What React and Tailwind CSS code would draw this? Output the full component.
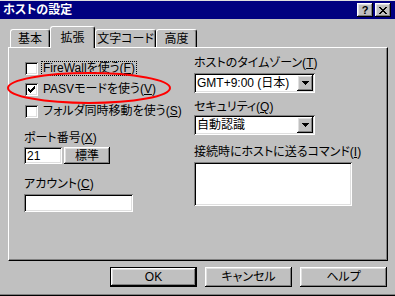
import React from 'react';

const raised =
  'shadow-[inset_-1px_-1px_0_#000,inset_1px_1px_0_#fff,inset_-2px_-2px_0_#808080,inset_2px_2px_0_#dfdfdf]';
const sunken =
  'shadow-[inset_1px_1px_0_#808080,inset_-1px_-1px_0_#fff,inset_2px_2px_0_#000,inset_-2px_-2px_0_#dfdfdf]';

const CheckBox = ({ checked }) => (
  <span className={`w-[13px] h-[13px] bg-white ${sunken} flex items-center justify-center shrink-0`}>
    {checked && (
      <svg width="7" height="7" viewBox="0 0 7 7" shapeRendering="crispEdges">
        <rect x="6" y="0" width="1" height="1" />
        <rect x="5" y="1" width="2" height="1" />
        <rect x="0" y="2" width="1" height="1" />
        <rect x="4" y="2" width="3" height="1" />
        <rect x="0" y="3" width="2" height="1" />
        <rect x="3" y="3" width="3" height="1" />
        <rect x="0" y="4" width="5" height="1" />
        <rect x="1" y="5" width="3" height="1" />
        <rect x="2" y="6" width="1" height="1" />
      </svg>
    )}
  </span>
);

const Select = ({ value }) => (
  <div className={`w-[121px] h-[20px] bg-white ${sunken} flex items-center pl-[3px] pr-[2px]`}>
    <span className="flex-1 leading-[14px] whitespace-nowrap">{value}</span>
    <span className={`w-[16px] h-[16px] bg-[#c0c0c0] ${raised} flex items-center justify-center`}>
      <svg width="7" height="4" viewBox="0 0 7 4" shapeRendering="crispEdges">
        <path d="M0 0h7v1H0zM1 1h5v1H1zM2 2h3v1H2zM3 3h1v1H3z" fill="#000" />
      </svg>
    </span>
  </div>
);

const Tab = ({ label, width, active }) => (
  <div
    className={`flex items-center justify-center border-t border-l border-white border-r border-r-black shadow-[inset_-1px_0_0_#808080] rounded-t-[3px] bg-[#c0c0c0] ${
      active ? 'h-[22px] relative z-10 -mb-px' : 'h-[18px]'
    }`}
    style={{ width }}
  >
    <span className="leading-[14px] whitespace-nowrap">{label}</span>
  </div>
);

const Button = ({ children, isDefault }) => (
  <div
    className={`w-[87px] h-[20px] flex items-center justify-center ${
      isDefault ? 'border border-black' : ''
    } ${raised}`}
  >
    {children}
  </div>
);

export default function App() {
  return (
    <div className="relative w-[395px] h-[296px] bg-[#c0c0c0] text-black text-[12px] font-['Liberation_Sans','Noto_Sans_CJK_JP',sans-serif] [font-feature-settings:'palt'] whitespace-nowrap border-t border-t-[#dfdfdf] flex flex-col overflow-hidden">
      {/* Title bar */}
      <div className="h-[18px] bg-[#000080] flex items-center pl-[3px] pr-[4px]">
        <span className="flex-1 text-white font-bold leading-[14px]">ホストの設定</span>
        <div className="flex gap-[2px]">
          <span className={`w-[16px] h-[14px] bg-[#c0c0c0] ${raised} flex items-center justify-center font-bold text-[11px] leading-none`}>
            ?
          </span>
          <span className={`w-[16px] h-[14px] bg-[#c0c0c0] ${raised} flex items-center justify-center`}>
            <svg width="8" height="7" viewBox="0 0 8 7" shapeRendering="crispEdges">
              <path d="M0 0h2v1H0zM6 0h2v1H6zM1 1h2v1H1zM5 1h2v1H5zM2 2h4v1H2zM3 3h2v1H3zM2 4h4v1H2zM1 5h2v1H1zM5 5h2v1H5zM0 6h2v1H0zM6 6h2v1H6z" fill="#000" />
            </svg>
          </span>
        </div>
      </div>

      {/* Tabs */}
      <div className="h-[28px] flex items-end pl-[10px]">
        <Tab label="基本" width={40} />
        <Tab label="拡張" width={45} active />
        <Tab label="文字コード" width={61} />
        <Tab label="高度" width={41} />
      </div>

      {/* Panel */}
      <div className="ml-[8px] w-[380px] h-[214px] border-t border-l border-white border-r border-b border-r-black border-b-black shadow-[inset_-1px_-1px_0_#808080] flex">
        {/* Left column */}
        <div className="w-[185px] pl-[15px] pt-[12px] flex flex-col">
          <div className="h-[16px] flex items-center">
            <span className="ml-px"><CheckBox /></span>
            <span className="ml-[3px] px-[1px] border border-dotted border-black leading-[13px]">
              FireWallを使う(<u>F</u>)
            </span>
          </div>
          <div className="h-[16px] mt-[5px] flex items-center">
            <span className="ml-px"><CheckBox checked /></span>
            <span className="ml-[5px] leading-[14px]">PASVモードを使う(<u>V</u>)</span>
          </div>
          <div className="h-[16px] mt-[6px] flex items-center">
            <span className="ml-px"><CheckBox /></span>
            <span className="ml-[5px] leading-[14px]">フォルダ同時移動を使う(<u>S</u>)</span>
          </div>
          <div className="mt-[12px] h-[14px] leading-[14px]">
            ポート番号(<u>X</u>)
          </div>
          <div className="mt-[2px] flex gap-[2px]">
            <div className={`w-[38px] h-[17px] bg-white ${sunken} flex items-center pl-[3px] leading-[14px]`}>21</div>
            <div className={`w-[46px] h-[17px] ${raised} flex items-center justify-center leading-[14px]`}>標準</div>
          </div>
          <div className="mt-[13px] h-[14px] leading-[14px]">
            アカウント(<u>C</u>)
          </div>
          <div className={`mt-[3px] w-[109px] h-[18px] bg-white ${sunken}`} />
        </div>

        {/* Right column */}
        <div className="pt-[8px] flex flex-col">
          <div className="h-[14px] leading-[14px]">
            ホストのタイムゾーン(<u>T</u>)
          </div>
          <div className="mt-[3px]">
            <Select value="GMT+9:00 (日本)" />
          </div>
          <div className="mt-[7px] h-[14px] leading-[14px]">
            セキュリティ(<u>Q</u>)
          </div>
          <div className="mt-[1px]">
            <Select value="自動認識" />
          </div>
          <div className="mt-[10px] h-[14px] leading-[14px]">
            接続時にホストに送るコマンド(<u>I</u>)
          </div>
          <div className={`mt-[3px] w-[158px] h-[44px] bg-white ${sunken}`} />
        </div>
      </div>

      {/* Buttons */}
      <div className="mt-[6px] pl-[110px] flex gap-[8px]">
        <Button isDefault>OK</Button>
        <Button>キャンセル</Button>
        <Button>ヘルプ</Button>
      </div>

      <div className="mt-auto h-[2px] border-t border-[#808080] border-b border-b-black" />

      {/* Red annotation */}
      <svg className="absolute left-0 top-0 pointer-events-none" width="395" height="296">
        <ellipse cx="89" cy="87" rx="81" ry="15" fill="none" stroke="#ff0000" strokeWidth="2" />
      </svg>
    </div>
  );
}
